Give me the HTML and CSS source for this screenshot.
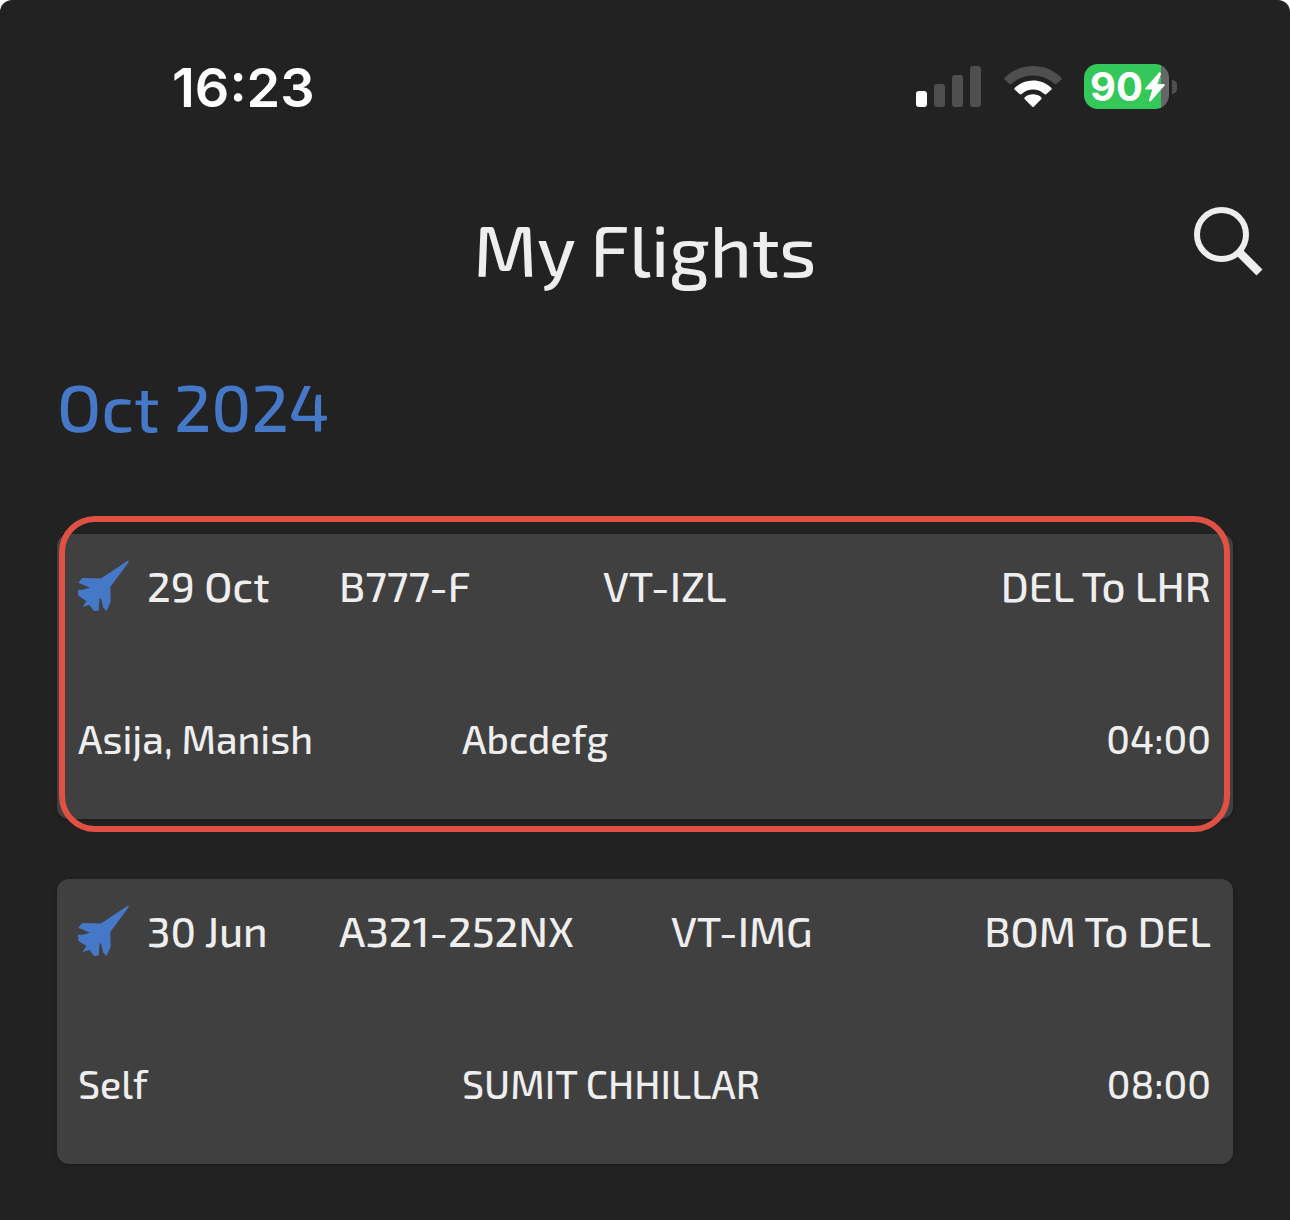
FILE: index.html
```html
<!DOCTYPE html>
<html lang="en">

<head>
    <meta charset="UTF-8">
    <meta name="viewport" content="width=device-width, initial-scale=1.0">
    <title>My Flights</title>
    <link rel="stylesheet" href="styles.css">
</head>

<body>
    <div class="status-bar">
        <span class="clock">16:23</span>
        <div class="status-icons">
            <svg width="66" height="41" viewBox="0 0 66 41">
                <rect x="0" y="25" width="11" height="16" rx="3" fill="#fff"/>
                <rect x="18" y="18" width="11" height="23" rx="3" fill="#4f4f4f"/>
                <rect x="36" y="9" width="11" height="32" rx="3" fill="#4f4f4f"/>
                <rect x="54" y="0" width="11" height="41" rx="3" fill="#4f4f4f"/>
            </svg>
            <svg width="58" height="42" viewBox="0 0 58 42">
                <path d="M0.8 11.5Q-0.4 12.6 0.8 13.8L5.4 17.8Q6.4 18.6 7.6 17.7C19.8 6.6 38.2 6.6 50.4 17.7Q51.6 18.6 52.6 17.8L57.2 13.8Q58.4 12.6 57.2 11.5C41.4-3.8 16.6-3.8 0.8 11.5Z" fill="#4f4f4f"/>
                <path d="M10.8 21.8Q9.8 22.8 10.8 23.8L15.6 28Q16.6 28.8 17.7 27.9C24.2 22 33.8 22 40.3 27.9Q41.4 28.8 42.4 28L47.2 23.8Q48.2 22.8 47.2 21.8C36.8 12.2 21.2 12.2 10.8 21.8Z" fill="#fff"/>
                <path d="M20.8 31.2Q19.8 32.2 20.8 33.2L28 40.4Q29 41.4 30 40.4L37.2 33.2Q38.2 32.2 37.2 31.2C32.4 27.4 25.6 27.4 20.8 31.2Z" fill="#fff"/>
            </svg>
            <div class="battery">
                <div class="battery-body">
                    <span>90</span>
                    <svg width="20" height="30" viewBox="0 0 20 30">
                        <path d="M14 0.5L0.4 16.2Q-0.2 17.6 1.2 17.6H7.4L4 28Q4 30.2 6 29L19.6 13.6Q20.2 12 18.6 12H12.4L16 1.8Q16 -0.6 14 0.5Z" fill="#fff"/>
                    </svg>
                </div>
                <div class="battery-cap"></div>
            </div>
        </div>
    </div>

    <header class="header">
        <h1>My Flights</h1>
        <button type="button" class="search" aria-label="Search">
            <svg width="70" height="70" viewBox="0 0 70 70" fill="none" stroke="#eee">
                <circle cx="27.5" cy="27.5" r="24.5" stroke-width="6"/>
                <path d="M45 45L65.5 65.5" stroke-width="8.5"/>
            </svg>
        </button>
    </header>

    <main>
        <h2>Oct 2024</h2>
        <ul class="flights">
            <li class="flight selected">
                <div class="flight-top">
                    <svg class="plane" width="52" height="52" viewBox="1 -1 52 52">
                        <path d="M50.7 0.7L52 1L50.7 3.5L33.3 27L33.7 41.5L29.5 51L26.3 47.7L24 38.5L22.5 38.5L21.8 50.5L17 51L12.5 45L5.5 47L9.5 41L1.3 35.7L1 29.7L5.3 29.7L13 27.7L1.3 22.8L5.3 18L23.7 18.5L28.5 15.5Z"/>
                    </svg>
                    <span class="date">29 Oct</span>
                    <span class="type">B777-F</span>
                    <span class="reg">VT-IZL</span>
                    <span class="route">DEL To LHR</span>
                </div>
                <div class="flight-bottom">
                    <span class="pic">Asija, Manish</span>
                    <span class="crew">Abcdefg</span>
                    <span class="time">04:00</span>
                </div>
            </li>
            <li class="flight">
                <div class="flight-top">
                    <svg class="plane" width="52" height="52" viewBox="1 -1 52 52">
                        <path d="M50.7 0.7L52 1L50.7 3.5L33.3 27L33.7 41.5L29.5 51L26.3 47.7L24 38.5L22.5 38.5L21.8 50.5L17 51L12.5 45L5.5 47L9.5 41L1.3 35.7L1 29.7L5.3 29.7L13 27.7L1.3 22.8L5.3 18L23.7 18.5L28.5 15.5Z"/>
                    </svg>
                    <span class="date">30 Jun</span>
                    <span class="type type-long">A321-252NX</span>
                    <span class="reg">VT-IMG</span>
                    <span class="route">BOM To DEL</span>
                </div>
                <div class="flight-bottom">
                    <span class="pic">Self</span>
                    <span class="crew">SUMIT CHHILLAR</span>
                    <span class="time">08:00</span>
                </div>
            </li>
        </ul>
    </main>
</body>

</html>
```

FILE: styles.css
```css
* {
    box-sizing: border-box;
}

html {
    background-color: #fff;
}

body {
    margin: 0;
    min-height: 100vh;
    background-color: #222;
    border-radius: 12px 12px 0 0;
    color: #eee;
    font-family: "Exo 2", "Noto Sans", sans-serif;
    font-weight: 500;
}

h1,
h2 {
    margin: 0;
    font-weight: 500;
}

/* status bar */
.status-bar {
    display: flex;
    justify-content: space-between;
    align-items: flex-start;
    padding: 64px 113px 0 172px;
    color: #fff;
    font-family: Inter, sans-serif;
}

.clock {
    font-size: 54px;
    font-weight: 600;
    line-height: 48px;
}

.status-icons {
    display: flex;
    align-items: center;
    gap: 22px;
}

.battery {
    display: flex;
    align-items: center;
    gap: 3px;
}

.battery-body {
    display: flex;
    align-items: center;
    width: 85px;
    height: 45px;
    padding-left: 6px;
    border-radius: 14px;
    background: linear-gradient(to right, #34c759 77px, #666 77px);
    font-size: 40px;
    font-weight: 700;
}

.battery-body svg {
    flex-shrink: 0;
    margin-left: 2px;
}

.battery-cap {
    width: 5px;
    height: 14px;
    border-radius: 0 7px 7px 0;
    background-color: #4f4f4f;
}

/* title */
.header {
    display: grid;
    grid-template-columns: 1fr auto 1fr;
    align-items: start;
    padding: 88px 26px 0;
}

.header h1 {
    grid-column: 2;
    font-size: 72px;
    line-height: 96px;
}

.search {
    justify-self: end;
    margin-top: 7px;
    padding: 0;
    border: none;
    background: none;
    cursor: pointer;
}

.search svg {
    display: block;
}

/* flight list */
main {
    padding: 66px 57px 56px;
}

h2 {
    color: #4678c8;
    font-size: 66px;
    line-height: 88px;
}

.flights {
    display: flex;
    flex-direction: column;
    gap: 60px;
    margin: 84px 0 0;
    padding: 0;
    list-style: none;
}

.flight {
    position: relative;
    padding: 23px 22px 54px 21px;
    border-radius: 12px;
    background-color: #404040;
    box-shadow: 0 2px 4px rgba(0, 0, 0, 0.2);
}

/* red outline drawn over the card */
.selected::after {
    content: "";
    position: absolute;
    top: -18px;
    right: 3px;
    bottom: -13px;
    left: 2px;
    border: 6px solid #e05144;
    border-radius: 36px;
}

.flight-top,
.flight-bottom {
    display: flex;
    white-space: nowrap;
}

.flight-top {
    align-items: center;
    font-size: 42px;
    line-height: 56px;
}

.flight-bottom {
    margin-top: 100px;
    font-size: 39px;
    line-height: 52px;
}

.plane {
    margin-right: 17px;
    fill: #4678c8;
}

.date {
    width: 192px;
}

.type {
    width: 264px;
}

.type-long {
    width: 332px;
}

.pic {
    width: 384px;
}

.route,
.time {
    margin-left: auto;
}
```
